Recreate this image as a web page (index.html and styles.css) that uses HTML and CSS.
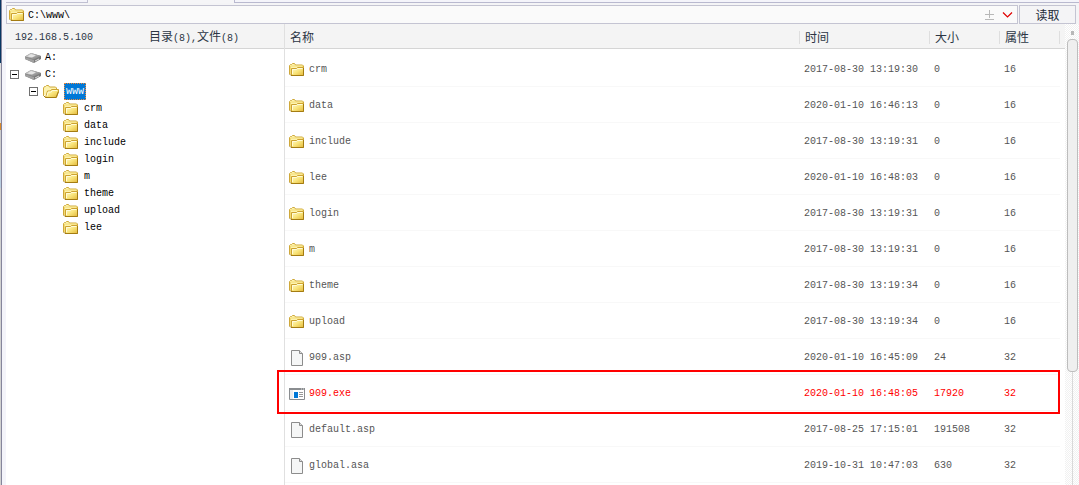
FILE: index.html
```html
<!DOCTYPE html>
<html lang="zh-CN">
<head>
<meta charset="utf-8">
<title>C:\www\</title>
<link rel="stylesheet" href="styles.css">
</head>
<body>
<svg class="defs" aria-hidden="true">
  <defs>
    <linearGradient id="gold" x1="0" y1="0" x2="1" y2="1"><stop offset="0" stop-color="#fffbd0"/><stop offset=".5" stop-color="#f9e57c"/><stop offset="1" stop-color="#e3b83a"/></linearGradient>
    <linearGradient id="metal" x1="0" y1="0" x2="1" y2="1"><stop offset="0" stop-color="#d8d8d8"/><stop offset="1" stop-color="#777"/></linearGradient>
    <symbol id="folder" viewBox="0 0 16 14">
      <path d="M.5 11V2.500L1.500 1.500h1l1-1h2l1 1.500h7l1 1v3" fill="#fdf3ae" stroke="#cfa83a"/>
      <path d="M1.500 11V3h12v2" fill="none" stroke="#f3da72"/>
      <path d="M2.500 12.500v-7h5l1-1h6v8z" fill="url(#gold)" stroke="#cda331"/>
      <path d="M.5 11l1.500 1.500h12.500V5" fill="none" stroke="#a47c12"/>
      <path d="M3.500 11V6.500h4l1-1h5" fill="none" stroke="#fffbd8"/>
    </symbol>
    <symbol id="folder-open" viewBox="0 0 16 14">
      <path d="M.5 10.500V3l1-1.500h1l1-1h2l1 1.500h6l1 1v2" fill="#fdf3ae" stroke="#cfa83a"/>
      <path d="M2.500 12.500L4.500 6h3l1-1.500h7v2l-2 6z" fill="url(#gold)" stroke="#cda331"/>
      <path d="M.5 10.500l2 2h10.500l2.500-6" fill="none" stroke="#a47c12"/>
      <path d="M4 11l1.200-4h3l1-1.500h5" fill="none" stroke="#fffbd8"/>
    </symbol>
    <symbol id="drive" viewBox="0 0 16 10">
      <path d="M0 3.500L6 0l10 3v3L9 10 0 6z" fill="#7a7a7a"/>
      <path d="M0 3.500L6 0l10 3-7 3.500z" fill="url(#metal)"/>
      <path d="M2 3.500L6 1l5 1.500-4 2z" fill="#e4e4e4"/>
      <path d="M0 4l9 3v3L0 6z" fill="#a0a0a0"/><path d="M10 8l4-2" stroke="#ddd"/>
    </symbol>
    <symbol id="file" viewBox="0 0 14 16">
      <path d="M1.500.5h8l3 3v12h-11z" fill="#f5f6f6" stroke="#8c8c8c"/>
      <path d="M9.500.5v3h3" fill="#ddd" stroke="#8c8c8c"/>
    </symbol>
    <symbol id="exe" viewBox="0 0 16 12">
      <path d="M.5.5h15v11H.5z" fill="#fff" stroke="#8a8d90"/>
      <path d="M0 0h16v2H0z" fill="#8a8d90"/><path d="M12 1h1m1 0h1" stroke="#ddd"/>
      <path d="M1 2h3v9H1z" fill="#eee"/><path d="M5 4h4v6H5z" fill="#0078d7"/>
      <path d="M10 4.500h4m-4 2h4m-4 2h4" stroke="#999"/>
    </symbol>
  </defs>
</svg>
<div class="app">
  <div class="edge"></div>
  <div class="window">
    <div class="tabs"><div class="tab-left"></div><div class="tab-active"></div><div class="tab-rest"></div></div>
    <form class="address">
      <div class="path">
        <svg class="ico"><use href="#folder"/></svg>
        <input class="path-input" type="text" value="C:\www\" aria-label="路径">
        <svg class="updown" viewBox="0 0 30 12"><path d="M1 5.500h9M5.500 1v8M1 10.500h9" stroke="#b8b8b8"/><path d="M19 3.500l4.500 4.500L28 3.500" stroke="#e00000" stroke-width="1.200" fill="none"/></svg>
      </div>
      <button class="read cjk" type="button">读取</button>
    </form>
    <div class="main">
      <section class="side">
        <header class="side-head"><span>192.168.5.100</span><span><span class="cjk">目录</span>(8),<span class="cjk">文件</span>(8)</span></header>
        <ul class="tree">
          <li class="node drive-node"><svg class="ico drive"><use href="#drive"/></svg><span>A:</span></li>
          <li class="node root"><button class="toggle" type="button" aria-label="C:"></button><svg class="ico drive"><use href="#drive"/></svg><span>C:</span></li>
          <li class="node sub"><button class="toggle" type="button" aria-label="www"></button><svg class="ico"><use href="#folder-open"/></svg><span class="selected">www</span></li>
          <li class="node leaf"><svg class="ico"><use href="#folder"/></svg><span>crm</span></li>
          <li class="node leaf"><svg class="ico"><use href="#folder"/></svg><span>data</span></li>
          <li class="node leaf"><svg class="ico"><use href="#folder"/></svg><span>include</span></li>
          <li class="node leaf"><svg class="ico"><use href="#folder"/></svg><span>login</span></li>
          <li class="node leaf"><svg class="ico"><use href="#folder"/></svg><span>m</span></li>
          <li class="node leaf"><svg class="ico"><use href="#folder"/></svg><span>theme</span></li>
          <li class="node leaf"><svg class="ico"><use href="#folder"/></svg><span>upload</span></li>
          <li class="node leaf"><svg class="ico"><use href="#folder"/></svg><span>lee</span></li>
        </ul>
      </section>
      <section class="list">
        <table class="files">
          <colgroup><col><col class="c-time"><col class="c-size"><col class="c-attr"></colgroup>
          <thead><tr><th class="cjk">名称</th><th class="cjk">时间</th><th class="cjk">大小</th><th class="cjk">属性</th></tr></thead>
          <tbody>
            <tr><td><div class="name"><svg class="ico"><use href="#folder"/></svg>crm</div></td><td>2017-08-30 13:19:30</td><td>0</td><td>16</td></tr>
            <tr><td><div class="name"><svg class="ico"><use href="#folder"/></svg>data</div></td><td>2020-01-10 16:46:13</td><td>0</td><td>16</td></tr>
            <tr><td><div class="name"><svg class="ico"><use href="#folder"/></svg>include</div></td><td>2017-08-30 13:19:31</td><td>0</td><td>16</td></tr>
            <tr><td><div class="name"><svg class="ico"><use href="#folder"/></svg>lee</div></td><td>2020-01-10 16:48:03</td><td>0</td><td>16</td></tr>
            <tr><td><div class="name"><svg class="ico"><use href="#folder"/></svg>login</div></td><td>2017-08-30 13:19:31</td><td>0</td><td>16</td></tr>
            <tr><td><div class="name"><svg class="ico"><use href="#folder"/></svg>m</div></td><td>2017-08-30 13:19:31</td><td>0</td><td>16</td></tr>
            <tr><td><div class="name"><svg class="ico"><use href="#folder"/></svg>theme</div></td><td>2017-08-30 13:19:34</td><td>0</td><td>16</td></tr>
            <tr><td><div class="name"><svg class="ico"><use href="#folder"/></svg>upload</div></td><td>2017-08-30 13:19:34</td><td>0</td><td>16</td></tr>
            <tr><td><div class="name"><svg class="ico file"><use href="#file"/></svg>909.asp</div></td><td>2020-01-10 16:45:09</td><td>24</td><td>32</td></tr>
            <tr class="marked"><td><div class="name"><svg class="ico exe"><use href="#exe"/></svg>909.exe</div></td><td>2020-01-10 16:48:05</td><td>17920</td><td>32</td></tr>
            <tr><td><div class="name"><svg class="ico file"><use href="#file"/></svg>default.asp</div></td><td>2017-08-25 17:15:01</td><td>191508</td><td>32</td></tr>
            <tr><td><div class="name"><svg class="ico file"><use href="#file"/></svg>global.asa</div></td><td>2019-10-31 10:47:03</td><td>630</td><td>32</td></tr>
          </tbody>
        </table>
        <div class="scrollbar"><div class="arrow"></div><div class="thumb"></div><div class="rail"></div></div>
      </section>
    </div>
  </div>
</div>
</body>
</html>
```
FILE: styles.css
```css
* { box-sizing: border-box; }
body {
  margin: 0;
  overflow: hidden;
  background: #f4f4fa;
  color: #000;
  font: 10px/16px "Liberation Mono", "Noto Sans CJK SC", monospace;
}
.defs { position: absolute; width: 0; height: 0; }
.cjk { font-family: "Noto Sans CJK SC", sans-serif; font-size: 12px; }

.app { display: flex; height: 100vh; }
.edge {
  flex: none;
  width: 2px;
  border-right: 1px solid #85859c;
  background: linear-gradient(#073763 0 63px, #ddd 63px 123px, #d98a2b 123px 130px, #ccc 130px 170px, #b9cde0 170px 188px, #d0d0d0 188px);
}
.window { flex: 1; min-width: 0; display: flex; flex-direction: column; padding-left: 4px; }

.tabs { display: flex; height: 3px; flex: none; }
.tab-left { width: 82px; border: solid #c0c0d2; border-width: 0 1px 1px 0; }
.tab-active { width: 146px; background: #f5f5f7; }
.tab-rest { flex: 1; border: solid #b9b9cf; border-width: 0 0 1px 1px; }

.address { display: flex; flex: none; gap: 1px; margin: 0; padding: 2px 3px 0 0; background: #f4f4f6; }
.path { flex: 1; display: flex; align-items: center; gap: 3px; height: 19px; padding: 0 3px 0 2px; border: 1px solid #c4c4d2; background: #fafafa; }
.path-input { flex: 1; min-width: 0; height: 17px; padding: 1px 0 0; border: 0; outline: 0; background: transparent; color: #000; font: inherit; }
.updown { width: 30px; height: 12px; }
.read { width: 57px; height: 19px; padding: 0; border: 1px solid #c4c4d2; background: #f4f4f6; color: #222b38; line-height: 16px; }

.ico { flex: none; width: 16px; height: 14px; }
.drive { height: 10px; }
.file { height: 16px; }
.exe { height: 12px; }

.main { display: flex; flex: 1; min-height: 0; overflow: hidden; background: #fff; }
.side { flex: none; width: 279px; border-right: 1px solid #e0e0e0; }
.side-head { display: flex; gap: 56px; height: 25px; align-items: center; padding: 3px 0 0 9px; background: #f4f4f4; border-bottom: 1px solid #d5d5d5; color: #2c3644; }
.tree { list-style: none; margin: 0; padding: 0; }
.node { display: flex; align-items: center; height: 17px; gap: 4px; }
.drive-node { padding-left: 19px; }
.root { padding-left: 4px; }
.root .toggle { margin-right: 2px; }
.sub { padding-left: 23px; gap: 5px; }
.leaf { padding-left: 57px; gap: 5px; }
.selected { padding: 0 1px; border: 1px dotted #f08a3a; background: #0078d7; color: #fff; line-height: 15px; }
.toggle { width: 9px; height: 9px; padding: 0; border: 1px solid #707070; background: linear-gradient(#000, #000) center / 5px 1px no-repeat #fff; }

.list { flex: 1; min-width: 0; display: flex; justify-content: space-between; background: linear-gradient(#f4f4f4 24px, #d5d5d5 24px 25px, transparent 25px); }
.files { flex: 1; align-self: flex-start; margin-right: 5px; border-collapse: separate; border-spacing: 0; table-layout: fixed; width: 100%; }
.c-time { width: 130px; }
.c-size { width: 70px; }
.c-attr { width: 60px; }
.files th { height: 27px; padding: 1px 0 3px 5px; text-align: left; font-weight: 400; line-height: 16px; color: #2c3644; background: linear-gradient(#dedede, #dedede) right 7px / 1px 13px no-repeat; }
.files td { height: 36px; padding: 2px 0 0 4px; border-bottom: 1px solid #f8f8f8; color: #555; white-space: nowrap; }
.name { display: flex; align-items: center; gap: 4px; }
.marked { position: relative; }
.files .marked td { color: #f00; }
.marked td:first-child::after { content: ""; position: absolute; top: -5px; right: 0; bottom: -3px; left: -8px; border: 2px solid #f00; }

.scrollbar { flex: none; width: 14px; padding: 3px 1px 0; display: flex; flex-direction: column; align-items: center; background: repeating-conic-gradient(#f1f1f1 0 25%, #fff 0 50%) 0 0 / 2px 2px; }
.arrow { flex: none; width: 3px; height: 4px; margin: 4px 0; background: #b8b8b8; }
.thumb { flex: 0 1 333px; width: 11px; border: 1px solid #bdbdbd; border-radius: 4px; background: #efefef; }
.rail { flex: 1; width: 1px; background: #d9d9d9; }
```
